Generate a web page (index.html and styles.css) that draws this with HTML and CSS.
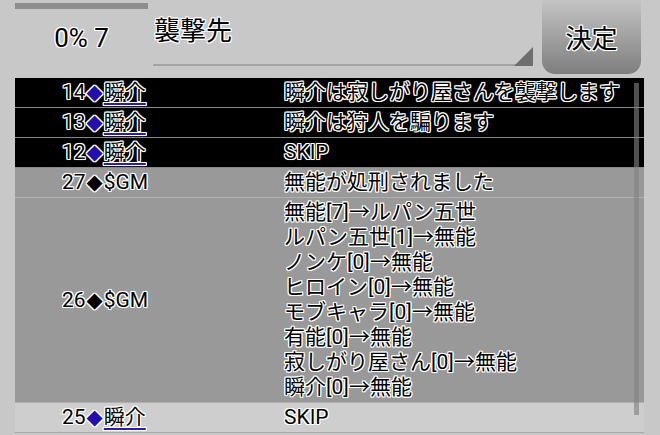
FILE: index.html
```html
<!DOCTYPE html>
<html lang="ja">
<head>
    <meta charset="UTF-8">
    <meta name="viewport" content="width=device-width, initial-scale=1.0">
    <title>襲撃先</title>
    <link rel="stylesheet" href="styles.css">
</head>
<body>
    <div id="screen">
        <div class="head">
            <div class="timer">
                <div class="timer-bar"></div>
                <div class="timer-text outline">0% 7</div>
            </div>
            <div class="select">
                <span class="outline">襲撃先</span>
                <span class="select-arrow"></span>
            </div>
            <div class="decide outline">決定</div>
        </div>

        <div class="log">
            <div class="row dark">
                <div class="who outline">14<span class="mark blue">◆</span><span class="name">瞬介</span></div>
                <div class="what outline">瞬介は寂しがり屋さんを襲撃します</div>
            </div>
            <div class="row dark">
                <div class="who outline">13<span class="mark blue">◆</span><span class="name">瞬介</span></div>
                <div class="what outline">瞬介は狩人を騙ります</div>
            </div>
            <div class="row dark">
                <div class="who outline">12<span class="mark blue">◆</span><span class="name">瞬介</span></div>
                <div class="what outline">SKIP</div>
            </div>
            <div class="row gm">
                <div class="who outline">27<span class="mark">◆</span>$GM</div>
                <div class="what outline">無能が処刑されました</div>
            </div>
            <div class="row gm">
                <div class="who outline">26<span class="mark">◆</span>$GM</div>
                <div class="what outline">
                    無能[7]→ルパン五世<br>
                    ルパン五世[1]→無能<br>
                    ノンケ[0]→無能<br>
                    ヒロイン[0]→無能<br>
                    モブキャラ[0]→無能<br>
                    有能[0]→無能<br>
                    寂しがり屋さん[0]→無能<br>
                    瞬介[0]→無能
                </div>
            </div>
            <div class="row light">
                <div class="who outline">25<span class="mark blue">◆</span><span class="name">瞬介</span></div>
                <div class="what outline">SKIP</div>
            </div>
            <div class="scrollbar"></div>
        </div>
    </div>
</body>
</html>
```

FILE: styles.css
```css
body, html {
    margin: 0;
    padding: 0;
    height: 100%;
    background-color: #c8c8c8;
    color: #000;
    font-family: Roboto, "Noto Sans CJK JP", sans-serif;
    overflow: hidden;
}
#screen {
    width: 660px;
    height: 435px;
}
.outline {
    text-shadow:
        1px 0 0 #fff, -1px 0 0 #fff, 0 1px 0 #fff, 0 -1px 0 #fff,
        1px 1px 0 #fff, -1px -1px 0 #fff, 1px -1px 0 #fff, -1px 1px 0 #fff,
        0 0 2px #fff;
}

/* header */
.head {
    display: flex;
    height: 78px;
}
.timer {
    width: 133px;
    margin-left: 15px;
}
.timer-bar {
    height: 6px;
    margin-top: 3px;
    background-color: #8e8e8e;
}
.timer-text {
    margin-top: 14px;
    font-size: 26px;
    line-height: 30px;
    text-align: center;
}
.select {
    position: relative;
    width: 380px;
    height: 64px;
    margin-left: 5px;
    border-bottom: 2px solid #a4a4a4;
    box-sizing: content-box;
}
.select span.outline {
    display: block;
    padding: 16px 0 0 1px;
    font-size: 26px;
    line-height: 30px;
}
.select-arrow {
    position: absolute;
    right: 0;
    bottom: -2px;
    width: 0;
    height: 0;
    border-left: 19px solid transparent;
    border-bottom: 19px solid #6e6e6e;
}
.decide {
    display: flex;
    align-items: center;
    justify-content: center;
    width: 99px;
    height: 74px;
    margin-left: 9px;
    padding-bottom: 2px;
    box-sizing: border-box;
    border-radius: 0 0 13px 13px;
    background: linear-gradient(#c4c4c4, #7e7e7e);
    font-size: 26px;
}

/* log table */
.log {
    position: relative;
    width: 629px;
    margin-left: 15px;
}
.row {
    display: grid;
    grid-template-columns: 269px 1fr;
    border-bottom: 1px solid #8a8a8a;
    font-size: 21px;
    line-height: 25px;
}
.row > div {
    padding: 2px 0;
    display: flex;
    align-items: center;
}
.row .what {
    display: block;
}
.who {
    padding-left: 47px !important;
}
.dark {
    background-color: #000;
}
.gm {
    background-color: #999;
    border-bottom-color: #b0b0b0;
}
.light {
    background-color: #cecece;
    border-bottom-color: #a8a8a8;
}
.mark {
    font-family: "DejaVu Sans", sans-serif;
    font-size: 21px;
    margin: 0 1px;
}
.mark.blue {
    color: #2410a8;
}
.name {
    text-decoration: underline;
    text-decoration-color: #2a1cb0;
    text-decoration-thickness: 2px;
    text-underline-offset: 4px;
}
.scrollbar {
    position: absolute;
    top: 5px;
    left: 619px;
    width: 5px;
    height: 332px;
    background-color: rgba(129, 129, 129, 0.62);
}
```
